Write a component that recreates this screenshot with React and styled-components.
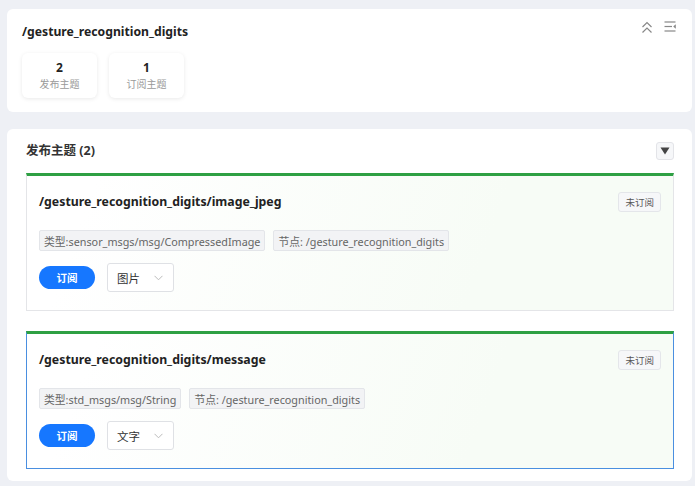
import styled, { createGlobalStyle } from 'styled-components';

const GlobalStyle = createGlobalStyle`
    body {
        margin: 0;
        background: #eef0f5;
        font-family: "Noto Sans", "Noto Sans CJK SC", sans-serif;
        color: #222;
    }
`;

const Page = styled.div`
    display: flex;
    flex-direction: column;
    gap: 17px;
    padding: 9px 3px 5px 7px;
`;

const Card = styled.div`
    background: #fff;
    border-radius: 6px;
    padding: ${p => p.$pad};
`;

const HeadRow = styled.div`
    display: flex;
    justify-content: space-between;
    align-items: ${p => p.$align || 'center'};
    height: ${p => p.$h || 'auto'};
`;

const NodeTitle = styled.h2`
    margin: 7px 0 0;
    font-size: 12.2px;
    font-weight: 700;
    line-height: 16px;
`;

const Tools = styled.div`
    display: flex;
    gap: 11px;
    padding: 4px 1px 0 0;
    color: #888;
`;

const Stats = styled.div`
    display: flex;
    gap: 12px;
    margin-top: 13px;
`;

const Stat = styled.div`
    width: 75px;
    height: 45px;
    border-radius: 6px;
    box-shadow: 0 1px 4px rgba(0, 0, 0, 0.09);
    display: flex;
    flex-direction: column;
    align-items: center;
    justify-content: center;
    gap: 3px;
`;

const StatNum = styled.span`
    font-size: 12px;
    font-weight: 700;
    line-height: 14px;
`;

const StatLabel = styled.span`
    font-size: 10px;
    color: #9a9a9a;
    line-height: 13px;
`;

const SectionTitle = styled.h3`
    margin: 0;
    font-size: 12.5px;
    font-weight: 700;
    line-height: 18px;
    color: #333;
`;

const Toggle = styled.button`
    width: 18px;
    height: 18px;
    margin: 0;
    padding: 0;
    border: 1px solid #e3e4e8;
    border-radius: 3px;
    background: #f6f7f9;
    display: flex;
    align-items: center;
    justify-content: center;
`;

const TopicList = styled.div`
    display: flex;
    flex-direction: column;
    gap: 20px;
    margin-top: 13px;
`;

const Topic = styled.div`
    border: 1px solid ${p => (p.$active ? '#4a8fe0' : '#e4e5e8')};
    border-top: 3px solid #2ea043;
    background: linear-gradient(110deg, #ffffff 10%, #f7fcf6 70%);
    padding: 16px 12px 18px;
`;

const TopicName = styled.div`
    font-size: 12.3px;
    font-weight: 700;
    line-height: 16px;
`;

const Badge = styled.span`
    height: 20px;
    padding: 0 6px;
    border: 1px solid #e4e6ea;
    border-radius: 3px;
    background: #f6f7f9;
    color: #555;
    font-size: 9.5px;
    display: flex;
    align-items: center;
    box-sizing: border-box;
`;

const Tags = styled.div`
    display: flex;
    gap: 8px;
    margin-top: 18px;
`;

const Tag = styled.span`
    height: 21px;
    padding: 0 4px;
    border: 1px solid #e3e5e9;
    border-radius: 2px;
    background: #f2f3f5;
    color: #666;
    font-size: 10.8px;
    display: flex;
    align-items: center;
    box-sizing: border-box;
`;

const Actions = styled.div`
    display: flex;
    align-items: center;
    gap: 12px;
    margin-top: 12px;
`;

const SubBtn = styled.button`
    width: 56px;
    height: 23px;
    border: none;
    border-radius: 12px;
    background: #1677ff;
    color: #fff;
    font-family: inherit;
    font-size: 10.5px;
    font-weight: 600;
`;

const Select = styled.div`
    width: 67px;
    height: 29px;
    box-sizing: border-box;
    border: 1px solid #dfe1e5;
    border-radius: 3px;
    background: #fff;
    display: flex;
    align-items: center;
    justify-content: space-between;
    padding: 0 10px 0 9px;
    font-size: 11.5px;
    color: #333;
`;

const ChevronsUp = () => (
    <svg width="12" height="13" viewBox="0 0 12 13" fill="none" stroke="currentColor" strokeWidth="1.2">
        <path d="M1.5 6 L6 1.5 L10.5 6" />
        <path d="M1.5 11.5 L6 7 L10.5 11.5" />
    </svg>
);

const MenuIcon = () => (
    <svg width="12" height="11" viewBox="0 0 12 11" fill="none" stroke="currentColor" strokeWidth="1.2">
        <path d="M0.5 1 H11.5" />
        <path d="M0.5 5.5 H8" />
        <path d="M0.5 10 H11.5" />
        <path d="M11.5 3.8 L9.6 5.5 L11.5 7.2 Z" fill="currentColor" strokeWidth="0.6" />
    </svg>
);

const Caret = () => (
    <svg width="10" height="8" viewBox="0 0 10 8">
        <path d="M0.5 0.5 H9.5 L5 7.5 Z" fill="#444" />
    </svg>
);

const ChevronDown = () => (
    <svg width="9" height="6" viewBox="0 0 9 6" fill="none" stroke="#bbb" strokeWidth="1">
        <path d="M0.5 0.8 L4.5 4.8 L8.5 0.8" />
    </svg>
);

const topics = [
    { name: '/gesture_recognition_digits/image_jpeg', type: 'sensor_msgs/msg/CompressedImage', mode: '图片' },
    { name: '/gesture_recognition_digits/message', type: 'std_msgs/msg/String', mode: '文字', active: true },
];

function App() {
    return (
        <>
            <GlobalStyle />
            <Page>
                <Card $pad="8px 15px 14px">
                    <HeadRow $align="flex-start">
                        <NodeTitle>/gesture_recognition_digits</NodeTitle>
                        <Tools>
                            <ChevronsUp />
                            <MenuIcon />
                        </Tools>
                    </HeadRow>
                    <Stats>
                        <Stat>
                            <StatNum>2</StatNum>
                            <StatLabel>发布主题</StatLabel>
                        </Stat>
                        <Stat>
                            <StatNum>1</StatNum>
                            <StatLabel>订阅主题</StatLabel>
                        </Stat>
                    </Stats>
                </Card>

                <Card $pad="13px 18px 12px 19px">
                    <HeadRow $h="18px">
                        <SectionTitle>发布主题 (2)</SectionTitle>
                        <Toggle><Caret /></Toggle>
                    </HeadRow>
                    <TopicList>
                        {topics.map(t => (
                            <Topic key={t.name} $active={t.active}>
                                <HeadRow $h="20px">
                                    <TopicName>{t.name}</TopicName>
                                    <Badge>未订阅</Badge>
                                </HeadRow>
                                <Tags>
                                    <Tag>类型:{t.type}</Tag>
                                    <Tag>节点: /gesture_recognition_digits</Tag>
                                </Tags>
                                <Actions>
                                    <SubBtn>订阅</SubBtn>
                                    <Select>
                                        {t.mode}
                                        <ChevronDown />
                                    </Select>
                                </Actions>
                            </Topic>
                        ))}
                    </TopicList>
                </Card>
            </Page>
        </>
    );
}

export default App;
